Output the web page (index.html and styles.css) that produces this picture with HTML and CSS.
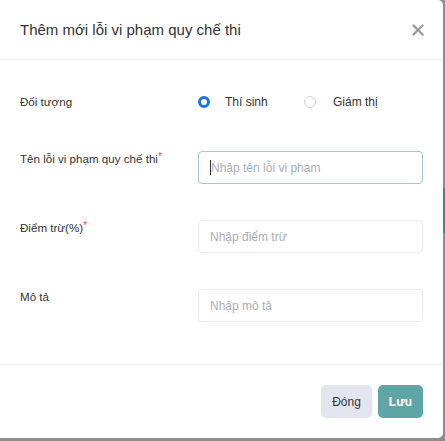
FILE: index.html
```html
<!DOCTYPE html>
<html lang="vi">
<head>
<meta charset="utf-8">
<link rel="stylesheet" href="styles.css">
</head>
<body>
<div class="modal">
  <div class="modal-header">
    <h1 class="modal-title">Thêm mới lỗi vi phạm quy chế thi</h1>
    <button class="close" aria-label="Đóng">
      <svg width="12" height="12" viewBox="0 0 12 12"><path d="M1.5 1.5 L10.5 10.5 M10.5 1.5 L1.5 10.5" stroke="#9a9a9a" stroke-width="2.4" stroke-linecap="round"/></svg>
    </button>
  </div>
  <div class="modal-body">
    <div class="row row-radio">
      <div class="label">Đối tượng</div>
      <div class="control radios">
        <label class="radio"><span class="dot checked"></span>Thí sinh</label>
        <label class="radio"><span class="dot"></span>Giám thị</label>
      </div>
    </div>
    <div class="row">
      <div class="label">Tên lỗi vi phạm quy chế thi<span class="req">*</span></div>
      <div class="control"><div class="input focus"><span class="caret"></span>Nhập tên lỗi vi phạm</div></div>
    </div>
    <div class="row">
      <div class="label">Điểm trừ(%)<span class="req">*</span></div>
      <div class="control"><div class="input">Nhập điểm trừ</div></div>
    </div>
    <div class="row">
      <div class="label">Mô tả</div>
      <div class="control"><div class="input">Nhập mô tả</div></div>
    </div>
  </div>
  <div class="modal-footer">
    <button class="btn btn-light">Đóng</button>
    <button class="btn btn-primary">Lưu</button>
  </div>
</div>
<div class="edge"></div>
</body>
</html>
```
FILE: styles.css
```css
html, body { margin: 0; padding: 0; }
body {
  width: 445px;
  height: 441px;
  background: #8d8d8d;
  font-family: "Liberation Sans", Arial, sans-serif;
  color: #333;
  position: relative;
  overflow: hidden;
}
.edge {
  position: absolute;
  right: 0;
  top: 188px;
  width: 2px;
  height: 45px;
  background: #3f8a86;
}
.modal {
  width: 443px;
  height: 438px;
  background: #fff;
  border-radius: 0 5px 5px 0;
  display: flex;
  flex-direction: column;
}
.modal-header {
  height: 59px;
  border-bottom: 1px solid #ececec;
  display: flex;
  align-items: center;
  justify-content: space-between;
  padding: 0 19px 0 20px;
}
.modal-title {
  margin: 0;
  font-size: 15px;
  font-weight: normal;
  color: #333;
}
.close {
  border: 0;
  background: none;
  padding: 0;
  width: 12px;
  height: 12px;
  display: flex;
}
.modal-body {
  flex: 1;
  padding: 0 20px;
  display: flex;
  flex-direction: column;
}
.row {
  display: flex;
  margin-top: 36px;
}
.row-radio {
  margin-top: 32px;
  height: 19px;
  align-items: center;
}
.row-radio + .row { margin-top: 40px; }
.label {
  width: 178px;
  font-size: 11.6px;
  line-height: 16px;
  color: #333;
}
.req { color: #e04a4a; font-size: 10px; vertical-align: top; line-height: 12px; }
.control { flex: 1; }
.radios { display: flex; gap: 0; font-size: 12px; }
.radio {
  display: flex;
  align-items: center;
  width: 106px;
  padding-left: 0;
}
.radio + .radio .dot { margin-right: 17px; }
.dot {
  width: 12px;
  height: 12px;
  box-sizing: border-box;
  border-radius: 50%;
  border: 1px solid #cfcfcf;
  margin-right: 15px;
  margin-left: 0;
  background: #fff;
}
.dot.checked {
  border: 3.5px solid #1d72e0;
}
.input {
  height: 33px;
  box-sizing: border-box;
  border: 1px solid #ececec;
  border-radius: 4px;
  padding: 0 11px;
  display: flex;
  align-items: center;
  font-size: 12px;
  color: #a9adb4;
}
.input.focus { border-color: #a3c8c8; }
.caret {
  width: 1px;
  height: 15px;
  background: #333;
  margin-right: 0;
}
.modal-footer {
  border-top: 1px solid #ececec;
  height: 73px;
  display: flex;
  align-items: center;
  justify-content: flex-end;
  gap: 6px;
  padding: 0 20px;
}
.btn {
  height: 33px;
  border: 0;
  border-radius: 5px;
  font-family: inherit;
  font-size: 12px;
  padding: 0;
}
.btn-light {
  width: 51px;
  background: #e2e5ed;
  color: #333;
}
.btn-primary {
  width: 45px;
  background: #5fa5a5;
  color: #fff;
  font-weight: bold;
}
```
